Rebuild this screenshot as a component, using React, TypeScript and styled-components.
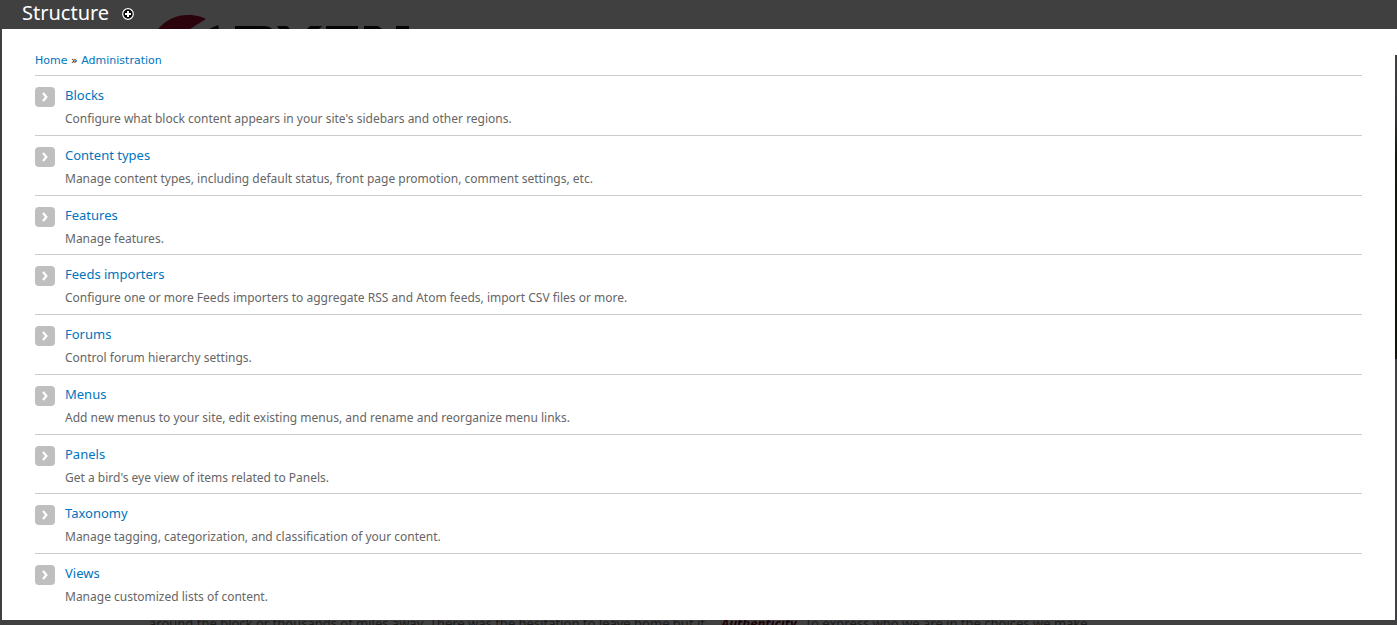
import React from "react";
import styled, { createGlobalStyle } from "styled-components";

const GlobalStyle = createGlobalStyle`
  *, *::before, *::after { box-sizing: border-box; }
  body {
    margin: 0;
    background: #404040;
    font-family: "Noto Sans", "Open Sans", sans-serif;
    font-size: 12px;
    color: #000;
  }
`;

const Overlay = styled.div`
  position: relative;
  display: flex;
  flex-direction: column;
  min-height: 100vh;
  overflow: hidden;
`;

const TitleBar = styled.header`
  position: relative;
  display: flex;
  align-items: center;
  gap: 13px;
  height: 29px;
  padding: 0 22px 3px;
  overflow: hidden;
`;

const Title = styled.h1`
  margin: 0;
  font-size: 20px;
  line-height: 26px;
  font-weight: 400;
  color: #fff;
`;

const ShortcutButton = styled.button`
  display: flex;
  margin-top: 2px;
  padding: 0;
  border: 0;
  background: none;
`;

const SiteLogo = styled.svg`
  position: absolute;
  left: 150px;
  bottom: 0;
`;

const Panel = styled.main`
  flex: 1;
  margin-left: 2px;
  padding: 24px 35px 10px 33px;
  background: #fff;
`;

const Breadcrumb = styled.nav`
  padding-bottom: 6px;
  font-family: "DejaVu Sans", sans-serif;
  font-size: 11px;
  line-height: 16px;
  border-bottom: 1px solid #ccc;
`;

const Link = styled.a`
  color: #0074bd;
  text-decoration: none;
`;

const AdminList = styled.ul`
  margin: 0;
  padding: 0;
  list-style: none;
`;

const AdminItem = styled.li`
  display: flex;
  gap: 10px;
  padding: 11px 0 7px;
  border-bottom: 1px solid #ccc;

  &:nth-child(4n + 3) {
    padding-bottom: 6px;
  }

  &:last-child {
    border-bottom: 0;
    padding-bottom: 0;
  }
`;

const ItemText = styled.div`
  display: flex;
  flex-direction: column;
  gap: 7px;
`;

const ItemTitle = styled(Link)`
  font-size: 13px;
  line-height: 16px;
`;

const ItemDescription = styled.p`
  margin: 0;
  line-height: 18px;
  color: #666;
`;

const PageScrollbar = styled.div`
  position: absolute;
  top: 55px;
  right: 0;
  bottom: 0;
  width: 2px;
  background: linear-gradient(#404044, #353538 60px, #14180c 100px, #10150a 304px, #404044 304px);
`;

const PageBehind = styled.footer`
  display: flex;
  align-items: center;
  height: 5px;
  padding-left: 149px;
  gap: 16px;
  overflow: hidden;
  white-space: nowrap;
  font-size: 13px;
  line-height: 16px;
  color: #1c1c1c;
`;

const Tagline = styled.strong`
  margin-right: 8px;
  font-style: italic;
  color: #1c0308;
`;

const items = [
  ["Blocks", "Configure what block content appears in your site's sidebars and other regions."],
  ["Content types", "Manage content types, including default status, front page promotion, comment settings, etc."],
  ["Features", "Manage features."],
  ["Feeds importers", "Configure one or more Feeds importers to aggregate RSS and Atom feeds, import CSV files or more."],
  ["Forums", "Control forum hierarchy settings."],
  ["Menus", "Add new menus to your site, edit existing menus, and rename and reorganize menu links."],
  ["Panels", "Get a bird's eye view of items related to Panels."],
  ["Taxonomy", "Manage tagging, categorization, and classification of your content."],
  ["Views", "Manage customized lists of content."],
];

const ArrowIcon = () => (
  <svg width="20" height="20" viewBox="0 0 20 20" aria-hidden="true">
    <rect width="20" height="20" rx="4" fill="#bfbfbf" />
    <path d="M8 6l3.4 4L8 14" fill="none" stroke="#fff" strokeWidth="2.2" />
  </svg>
);

export default function App() {
  return (
    <>
      <GlobalStyle />
      <Overlay>
        <TitleBar>
          <SiteLogo width="270" height="15" viewBox="0 0 270 15" aria-hidden="true">
            <path d="M8 15C17 5 27 1 38 1c8 0 14 2 18 4L40 15z" fill="#2b030c" />
            <path d="M59 15l9-4 1 4z" fill="#0a0a0a" />
            <path
              d="M85 12h28q7 0 9 3H85zM127 12h10l3 3h-11zM160 12h12l-3 3h-12zM176 12h32v3h-32zM214 12h14l4 3h-18zM246 12h13v3h-13z"
              fill="#050505"
            />
          </SiteLogo>
          <Title>Structure</Title>
          <ShortcutButton type="button" aria-label="Add to shortcuts">
            <svg width="12" height="12" viewBox="0 0 12 12">
              <circle cx="6" cy="6" r="5.3" fill="#000" stroke="#fff" strokeWidth="1.2" />
              <path d="M6 3v6M3 6h6" stroke="#fff" strokeWidth="2" />
            </svg>
          </ShortcutButton>
        </TitleBar>
        <Panel>
          <Breadcrumb aria-label="Breadcrumb">
            <Link href="#home">Home</Link> » <Link href="#administration">Administration</Link>
          </Breadcrumb>
          <AdminList>
            {items.map(([title, description]) => (
              <AdminItem key={title}>
                <ArrowIcon />
                <ItemText>
                  <ItemTitle href={"#" + title.toLowerCase().replace(" ", "-")}>{title}</ItemTitle>
                  <ItemDescription>{description}</ItemDescription>
                </ItemText>
              </AdminItem>
            ))}
          </AdminList>
        </Panel>
        <PageBehind>
          <span>around the block or thousands of miles away. There was the hesitation to leave home but it</span>
          <span>
            <Tagline>Authenticity</Tagline>
            To express who we are in the choices we make
          </span>
        </PageBehind>
        <PageScrollbar />
      </Overlay>
    </>
  );
}
